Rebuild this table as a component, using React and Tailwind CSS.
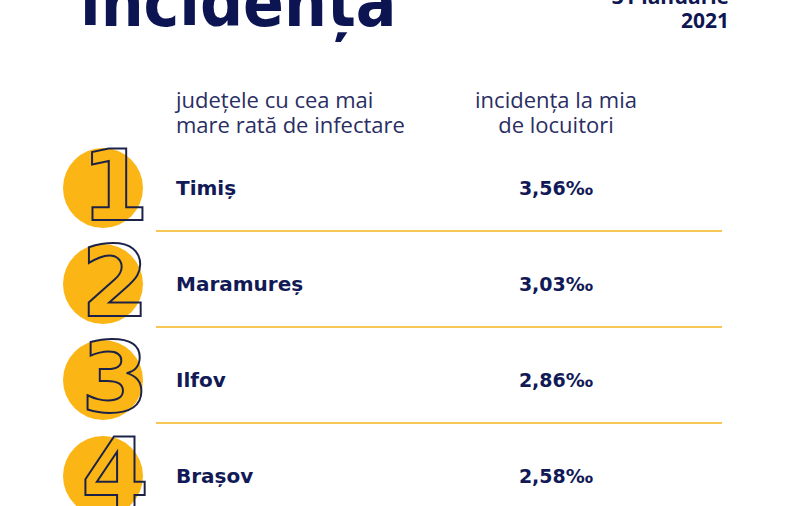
import React from 'react';

const rows = [
  { rank: '1', county: 'Timiș', value: '3,56‰' },
  { rank: '2', county: 'Maramureș', value: '3,03‰' },
  { rank: '3', county: 'Ilfov', value: '2,86‰' },
  { rank: '4', county: 'Brașov', value: '2,58‰' },
];

const RankRow = ({ rank, county, value }) => (
  <div className="flex h-[96px]">
    {/* badge */}
    <div className="relative w-[156px] shrink-0">
      <div className="ml-[63px] mt-[12px] w-[80px] h-[80px] rounded-full bg-[#fbb515]" />
      <span className="absolute left-[80px] top-[14px] w-[70px] text-center font-['DejaVu_Sans'] font-bold text-[98px] leading-[72px] text-transparent [-webkit-text-stroke:2px_#1b2147]">
        {rank}
      </span>
    </div>

    <div className="flex items-center w-[566px] pt-[10px] border-b-2 border-[#f8c654]">
      <div className="w-[320px] pl-5 font-['DejaVu_Sans'] font-bold text-[20px] text-[#111a56]">{county}</div>
      <div className="w-[160px] text-center font-['DejaVu_Sans'] font-bold text-[19px] text-[#111a56]">{value}</div>
    </div>
  </div>
);

export default function App() {
  return (
    <div className="w-[800px] h-[506px] overflow-hidden bg-white font-['Open_Sans',sans-serif]">
      {/* title + date */}
      <div className="flex justify-between h-[88px] pl-[80px] pr-[71px]">
        <h1 className="-mt-[30px] font-['DejaVu_Sans'] [font-stretch:condensed] font-bold text-[67px] leading-none text-[#0c1452]">
          incidența
        </h1>
        <div className="-mt-[16px] text-right font-bold text-[21px] leading-[24px] text-[#0f1752]">
          31 ianuarie
          <br />
          2021
        </div>
      </div>

      {/* column headings */}
      <div className="flex h-[49px] -mt-[1px] pl-[176px] text-[22px] leading-[25px] text-[#2a2e63]">
        <div className="w-[298px]">
          județele cu cea mai
          <br />
          mare rată de infectare
        </div>
        <div className="w-[164px] text-center">
          incidența la mia
          <br />
          de locuitori
        </div>
      </div>

      {rows.map(r => (
        <RankRow key={r.rank} {...r} />
      ))}
    </div>
  );
}
